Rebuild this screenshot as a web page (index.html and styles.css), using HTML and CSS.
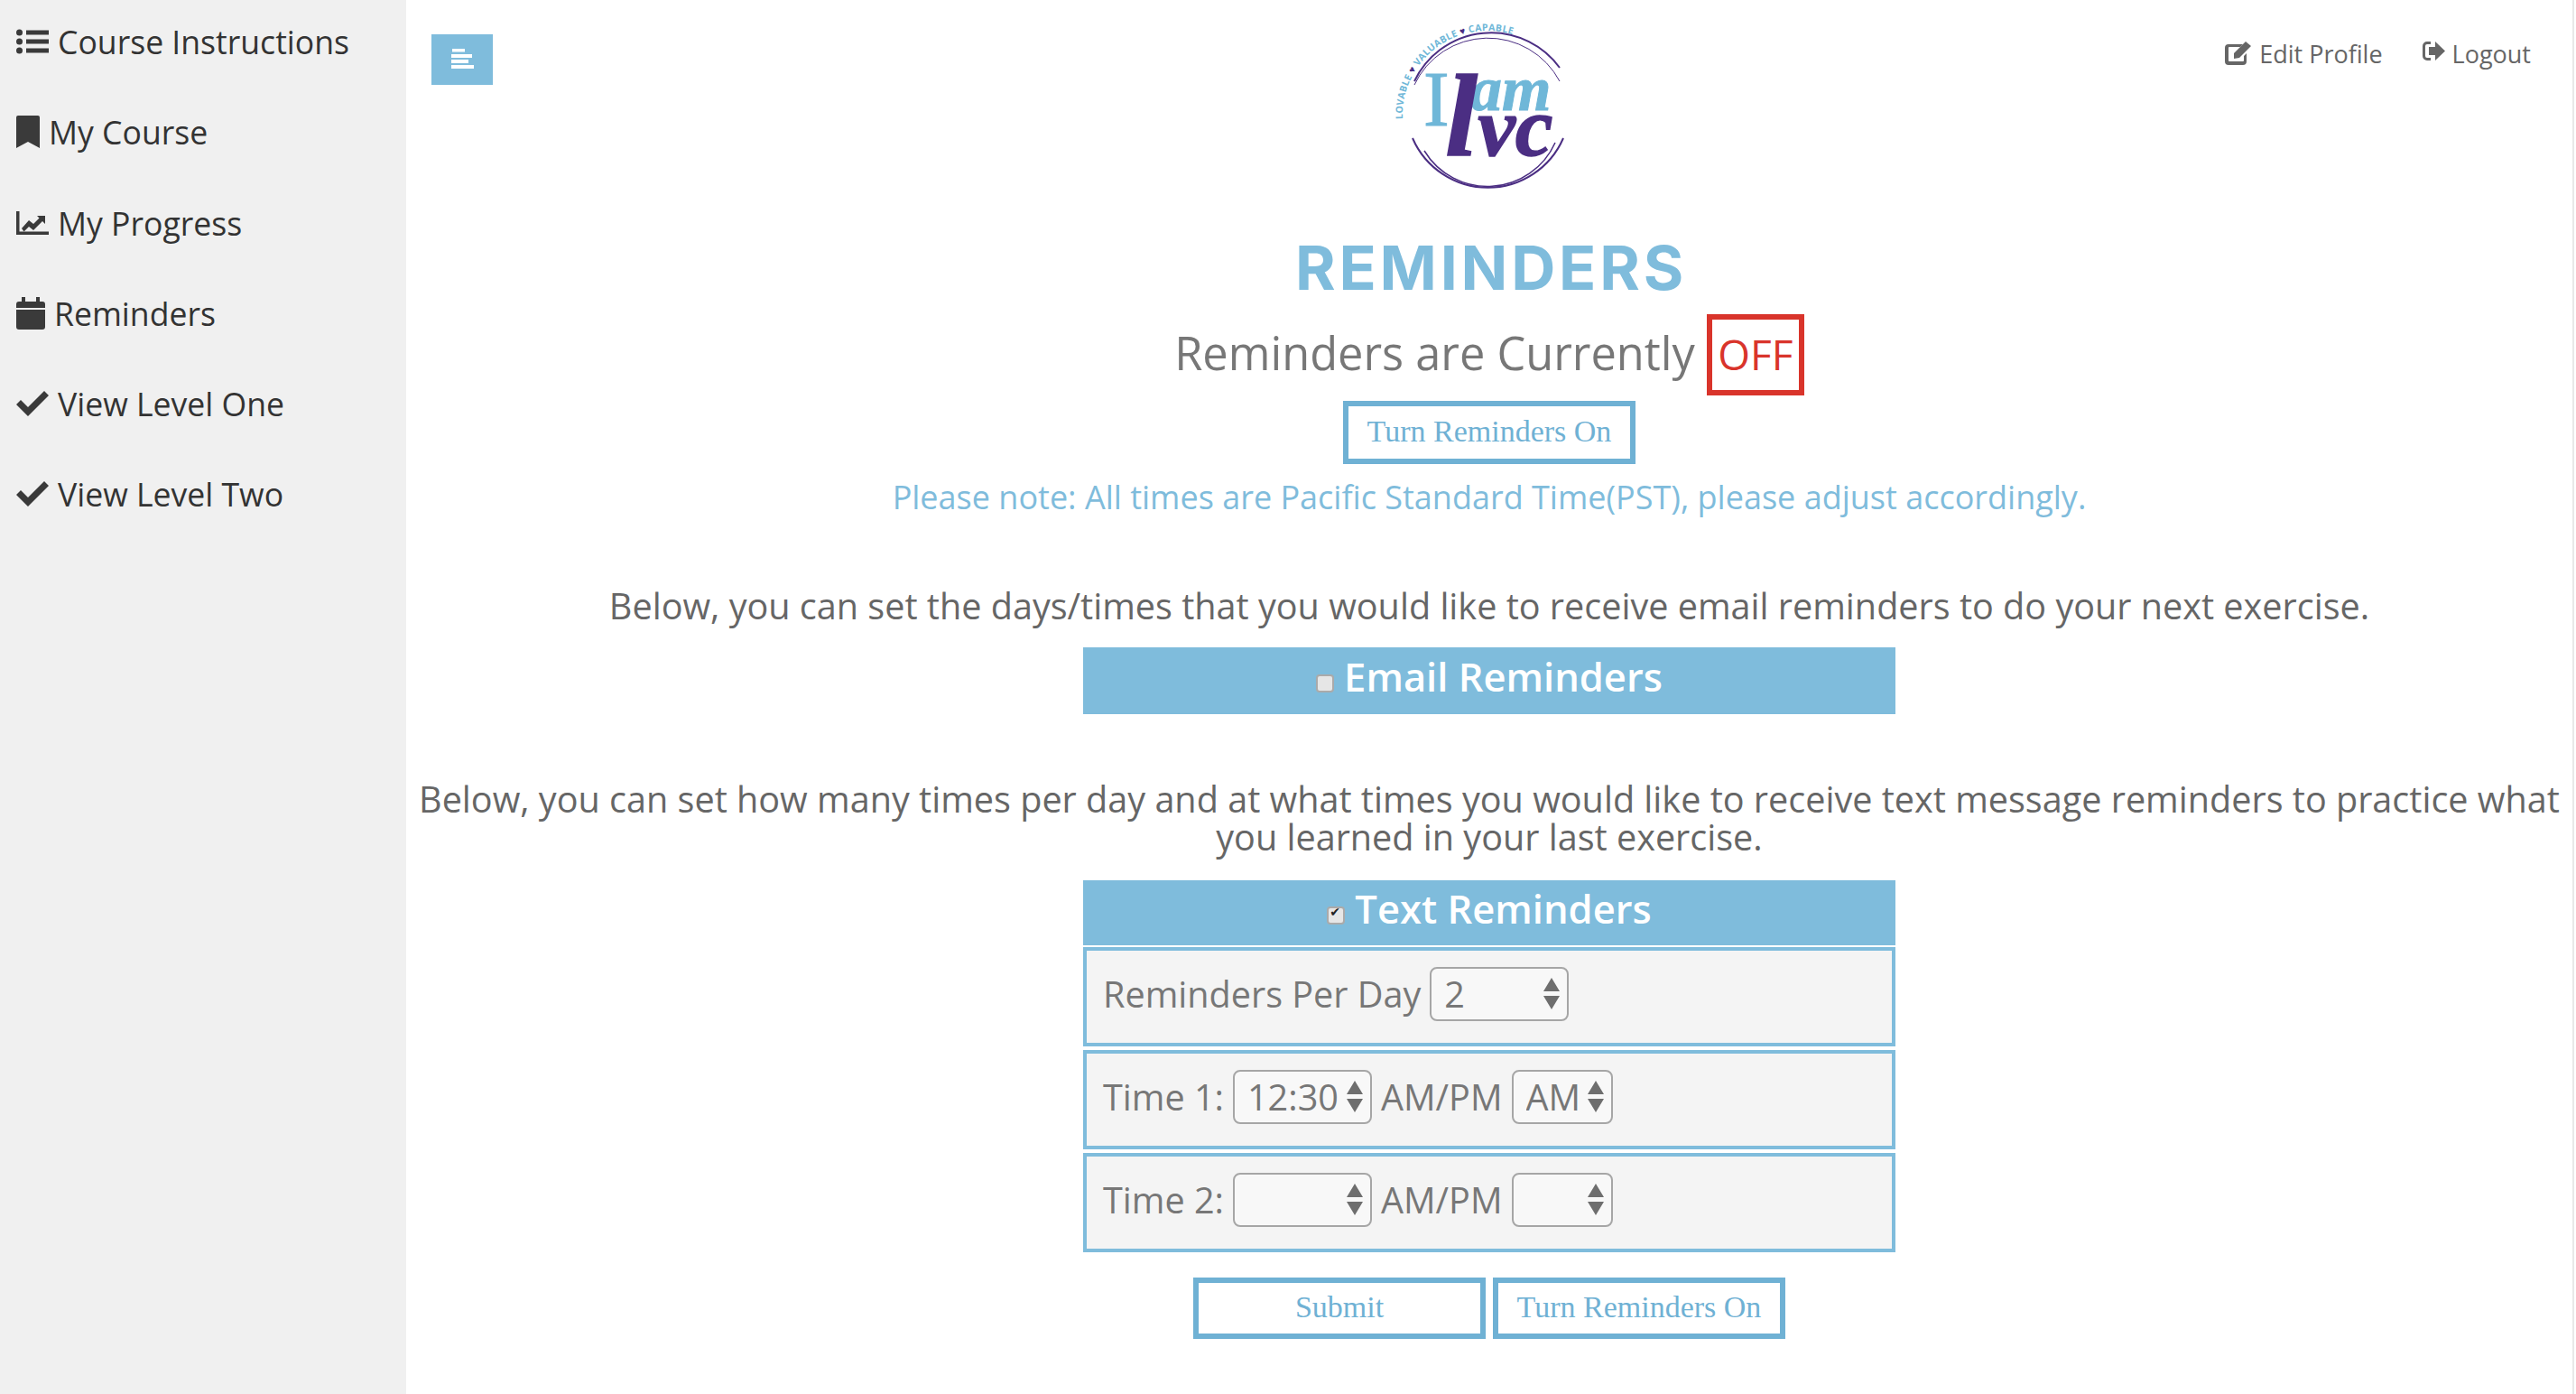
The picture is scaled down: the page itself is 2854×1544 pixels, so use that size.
FILE: index.html
```html
<!DOCTYPE html>
<html lang="en">
<head>
    <meta charset="UTF-8">
    <title>Reminders</title>
    <link rel="stylesheet" href="styles.css">
</head>
<body>
    <nav class="sidebar">
        <a class="nav-item" href="#">
            <svg class="nav-icon" width="36" height="28" viewBox="0 0 36 28"><circle cx="3.500" cy="4" r="3.500"/><circle cx="3.500" cy="14" r="3.500"/><circle cx="3.500" cy="24" r="3.500"/><path d="M11 1.500h25v5H11zM11 11.500h25v5H11zM11 21.500h25v5H11z"/></svg>
            Course Instructions
        </a>
        <a class="nav-item" href="#">
            <svg class="nav-icon" width="26" height="36" viewBox="0 0 26 36"><path d="M2 0h22a2 2 0 0 1 2 2v34l-13-7-13 7V2a2 2 0 0 1 2-2z"/></svg>
            My Course
        </a>
        <a class="nav-item" href="#">
            <svg class="nav-icon" width="36" height="26" viewBox="0 0 36 26"><path d="M0 0h3.500v22.500H36V26H0z"/><path d="M6 19l8-9 5 4 6.500-6.500L23 5h9v9l-3-3-10 10-5-4-5.500 5.500z"/></svg>
            My Progress
        </a>
        <a class="nav-item" href="#">
            <svg class="nav-icon" width="32" height="36" viewBox="0 0 32 36"><path d="M6 0h4v5h12V0h4v5h3a3 3 0 0 1 3 3v4H0V8a3 3 0 0 1 3-3h3zM0 14h32v19a3 3 0 0 1-3 3H3a3 3 0 0 1-3-3z"/></svg>
            Reminders
        </a>
        <a class="nav-item" href="#">
            <svg class="nav-icon" width="36" height="28" viewBox="0 0 36 28"><path d="M0 15l5-5 8 8L31 0l5 5-23 23z"/></svg>
            View Level One
        </a>
        <a class="nav-item" href="#">
            <svg class="nav-icon" width="36" height="28" viewBox="0 0 36 28"><path d="M0 15l5-5 8 8L31 0l5 5-23 23z"/></svg>
            View Level Two
        </a>
    </nav>

    <main class="content">
        <header class="topbar">
            <div class="topbar-left">
                <button class="menu-toggle" type="button">
                    <svg width="25" height="22" viewBox="0 0 25 22" fill="#fff"><path d="M1 0h14v3.500H1zM0 6h23v4H0zM0 12h19v4H0zM0 18h25v4H0z"/></svg>
                </button>
            </div>
            <svg class="logo" width="218" height="190" viewBox="-14 0 218 190">
                <defs>
                    <path id="logoArc" d="M-1 110A94 94 0 0 1 126 18"/>
                </defs>
                <g fill="none" stroke="#4b2e83">
                    <path d="M12 68A94 94 0 0 1 173 53" stroke-width="2"/>
                    <path d="M12 72A90 90 0 0 1 173 68" stroke-width="1"/>
                    <path d="M10 131A91 91 0 0 0 177 131" stroke-width="2"/>
                    <path d="M23 145A82 82 0 0 0 168 136" stroke-width="1.500"/>
                </g>
                <text class="logo-ring" fill="#6fb7d8"><textPath href="#logoArc">LOVABLE <tspan fill="#4b2e83">♥</tspan> VALUABLE <tspan fill="#4b2e83">♥</tspan> CAPABLE</textPath></text>
                <text class="logo-i" x="22" y="117" fill="#6fb7d8">I</text>
                <text class="logo-am" x="74" y="100" fill="#6fb7d8">am</text>
                <text class="logo-lvc" x="46" y="150" fill="#4b2e83">l<tspan class="logo-vc">vc</tspan></text>
            </svg>
            <div class="topbar-links">
                <a class="top-link" href="#">
                    <svg width="30" height="26" viewBox="0 0 30 26"><path d="M4 3h16l-3 3H5a1 1 0 0 0-1 1v14a1 1 0 0 0 1 1h15a1 1 0 0 0 1-1v-5l3-3v9a4 4 0 0 1-4 4H4a4 4 0 0 1-4-4V7a4 4 0 0 1 4-4z"/><path d="M10 13L23 0l6 5-13 13-6 1z"/></svg>
                    Edit Profile
                </a>
                <a class="top-link" href="#">
                    <svg width="25" height="21" viewBox="0 0 25 21"><path d="M9 3H5a2 2 0 0 0-2 2v11a2 2 0 0 0 2 2h4v3H5a5 5 0 0 1-5-5V5a5 5 0 0 1 5-5h4z"/><path d="M14 0l11 10.500L14 21v-6H7V6h7z"/></svg>
                    Logout
                </a>
            </div>
        </header>

        <h1 class="page-title">REMINDERS</h1>
        <div class="status-line">
            <span class="status-text">Reminders are Currently</span>
            <span class="status-badge">OFF</span>
        </div>
        <div class="action-row first-action">
            <button class="outline-btn" type="button">Turn Reminders On</button>
        </div>
        <p class="note">Please note: All times are Pacific Standard Time(PST), please adjust accordingly.</p>

        <p class="intro email-intro">Below, you can set the days/times that you would like to receive email reminders to do your next exercise.</p>
        <div class="panel">
            <label class="panel-head email-head"><input type="checkbox"> Email Reminders</label>
        </div>

        <p class="intro text-intro">Below, you can set how many times per day and at what times you would like to receive text message reminders to practice what you learned in your last exercise.</p>
        <form class="panel">
            <label class="panel-head text-head"><input type="checkbox" checked> Text Reminders</label>

            <div class="field-row">
                <label>Reminders Per Day</label>
                <span class="select-wrap wide">
                    <select><option>2</option></select>
                    <svg class="arrows" width="18" height="35" viewBox="0 0 18 35"><path d="M9 0l9 15H0zM0 20h18L9 35z"/></svg>
                </span>
            </div>
            <div class="field-row">
                <label>Time 1:</label>
                <span class="select-wrap wide">
                    <select><option>12:30</option></select>
                    <svg class="arrows" width="18" height="35" viewBox="0 0 18 35"><path d="M9 0l9 15H0zM0 20h18L9 35z"/></svg>
                </span>
                <label>AM/PM</label>
                <span class="select-wrap narrow">
                    <select><option>AM</option></select>
                    <svg class="arrows" width="18" height="35" viewBox="0 0 18 35"><path d="M9 0l9 15H0zM0 20h18L9 35z"/></svg>
                </span>
            </div>
            <div class="field-row">
                <label>Time 2:</label>
                <span class="select-wrap wide">
                    <select><option></option></select>
                    <svg class="arrows" width="18" height="35" viewBox="0 0 18 35"><path d="M9 0l9 15H0zM0 20h18L9 35z"/></svg>
                </span>
                <label>AM/PM</label>
                <span class="select-wrap narrow">
                    <select><option></option></select>
                    <svg class="arrows" width="18" height="35" viewBox="0 0 18 35"><path d="M9 0l9 15H0zM0 20h18L9 35z"/></svg>
                </span>
            </div>

            <div class="action-row form-actions">
                <button class="outline-btn fixed" type="submit">Submit</button>
                <button class="outline-btn fixed" type="button">Turn Reminders On</button>
            </div>
        </form>
    </main>
</body>
</html>
```

FILE: styles.css
```css
body {
    margin: 0;
    display: flex;
    height: 1544px;
    overflow: hidden;
    font-family: "Open Sans", Arial, sans-serif;
    color: #666666;
    background-color: #ffffff;
}

p {
    margin: 0;
}

/* sidebar */
.sidebar {
    width: 450px;
    flex-shrink: 0;
    box-sizing: border-box;
    padding: 16px 0 0 18px;
    background-color: #f0f0f0;
}

.nav-item {
    display: flex;
    align-items: center;
    gap: 10px;
    height: 60px;
    margin-bottom: 40.300px;
    font-size: 35.600px;
    color: #333333;
    text-decoration: none;
}

.nav-icon {
    fill: #3a3a3a;
    flex-shrink: 0;
}

/* main column */
.content {
    flex: 1;
    min-width: 0;
    box-sizing: border-box;
    padding: 0 10px;
    margin-right: 2px;
    border-right: 2px solid #e8e8e8;
    text-align: center;
}

.topbar {
    display: grid;
    grid-template-columns: 1fr auto 1fr;
    height: 256px;
}

.topbar-left {
    text-align: left;
    padding: 38px 0 0 18px;
}

.menu-toggle {
    width: 68px;
    height: 56px;
    border: none;
    padding: 0;
    background-color: #7fbcdc;
}

.logo {
    margin-top: 22px;
}

.logo-ring {
    font-family: "Open Sans", sans-serif;
    font-size: 10.500px;
    font-weight: 700;
    letter-spacing: 0.300px;
}

.logo-i {
    font-family: "Liberation Serif", serif;
    font-size: 86px;
    stroke: #6fb7d8;
    stroke-width: 1;
}

.logo-am {
    font-family: "Liberation Serif", serif;
    font-style: italic;
    font-weight: 700;
    font-size: 70px;
    stroke: #6fb7d8;
    stroke-width: 1;
}

.logo-lvc {
    font-family: "Liberation Serif", serif;
    font-style: italic;
    font-weight: 700;
    font-size: 130px;
    stroke: #4b2e83;
    stroke-width: 1.500;
}

.logo-vc {
    font-size: 94px;
}

.topbar-links {
    display: flex;
    justify-content: flex-end;
    gap: 44px;
    padding: 42px 36px 0 0;
}

.top-link {
    display: flex;
    align-items: flex-start;
    gap: 8px;
    font-size: 27px;
    line-height: 36px;
    color: #666666;
    text-decoration: none;
}

.top-link svg {
    fill: #666666;
    margin-top: 4px;
}

.page-title {
    margin: 0;
    padding-left: 4px;
    font-family: Inter, Arial, sans-serif;
    font-size: 68px;
    font-weight: 700;
    line-height: 80px;
    letter-spacing: 3.800px;
    color: #7fbcdc;
}

.status-line {
    display: flex;
    justify-content: center;
    align-items: center;
    gap: 13px;
    margin-top: 12px;
    font-size: 50.500px;
    color: #777777;
}

.status-text {
    padding-bottom: 6px;
}

.status-badge {
    box-sizing: border-box;
    width: 108px;
    height: 90px;
    border: 6px solid #d9342b;
    font-size: 46px;
    font-weight: 500;
    line-height: 76px;
    color: #d9342b;
}

.action-row {
    display: flex;
    justify-content: center;
    gap: 8px;
}

.first-action {
    margin-top: 6px;
}

.outline-btn {
    box-sizing: border-box;
    width: 324px;
    height: 70px;
    padding: 0 0 2px;
    border: 6px solid #6fb1d4;
    background-color: #ffffff;
    font-family: "Liberation Serif", serif;
    font-size: 34px;
    color: #6fb1d4;
}

.outline-btn.fixed {
    height: 68px;
}

.note {
    margin-top: 16px;
    font-size: 36px;
    line-height: 42px;
    color: #7fbcdc;
}

.intro {
    font-size: 39.600px;
    line-height: 42px;
}

.email-intro {
    margin-top: 78px;
}

.text-intro {
    margin-top: 73px;
}

.panel {
    display: flex;
    flex-direction: column;
    align-items: center;
}

.email-intro + .panel {
    margin-top: 25px;
}

.text-intro + .panel {
    margin-top: 27px;
}

.panel-head {
    display: flex;
    justify-content: center;
    align-items: center;
    gap: 11px;
    box-sizing: border-box;
    width: 900px;
    padding-bottom: 9px;
    background-color: #7fbcdc;
    font-size: 43.500px;
    font-weight: 600;
    color: #ffffff;
}

.email-head {
    height: 74px;
}

.text-head {
    height: 72px;
    margin-bottom: 2px;
}

.panel-head input {
    appearance: none;
    position: relative;
    width: 20px;
    height: 20px;
    margin: 15px 0 0;
    border: 2px solid #aaaaaa;
    border-radius: 4px;
    background-color: #e6e6e6;
}

.panel-head input:checked::after {
    content: "✔";
    position: absolute;
    left: 1px;
    top: -4px;
    font-family: "DejaVu Sans", sans-serif;
    font-size: 14px;
    color: #222222;
}

.field-row {
    display: flex;
    align-items: center;
    gap: 10px;
    box-sizing: border-box;
    width: 900px;
    height: 110px;
    margin-bottom: 4px;
    padding: 0 18px 6px;
    border: 4px solid #7fbcdc;
    background-color: #f4f4f4;
    font-size: 39.600px;
    color: #777777;
}

.select-wrap {
    position: relative;
    display: block;
    height: 60px;
}

.select-wrap.wide {
    width: 154px;
}

.select-wrap.narrow {
    width: 112px;
}

.select-wrap select {
    appearance: none;
    box-sizing: border-box;
    width: 100%;
    height: 100%;
    padding: 0 0 0 14px;
    border: 2px solid #a6a6a6;
    border-radius: 8px;
    background-color: #f8f8f8;
    font-family: "Open Sans", sans-serif;
    font-size: 39.600px;
    color: #777777;
}

.arrows {
    position: absolute;
    right: 10px;
    top: 12px;
    fill: #6e6e6e;
}

.form-actions {
    margin-top: 24px;
}
```
